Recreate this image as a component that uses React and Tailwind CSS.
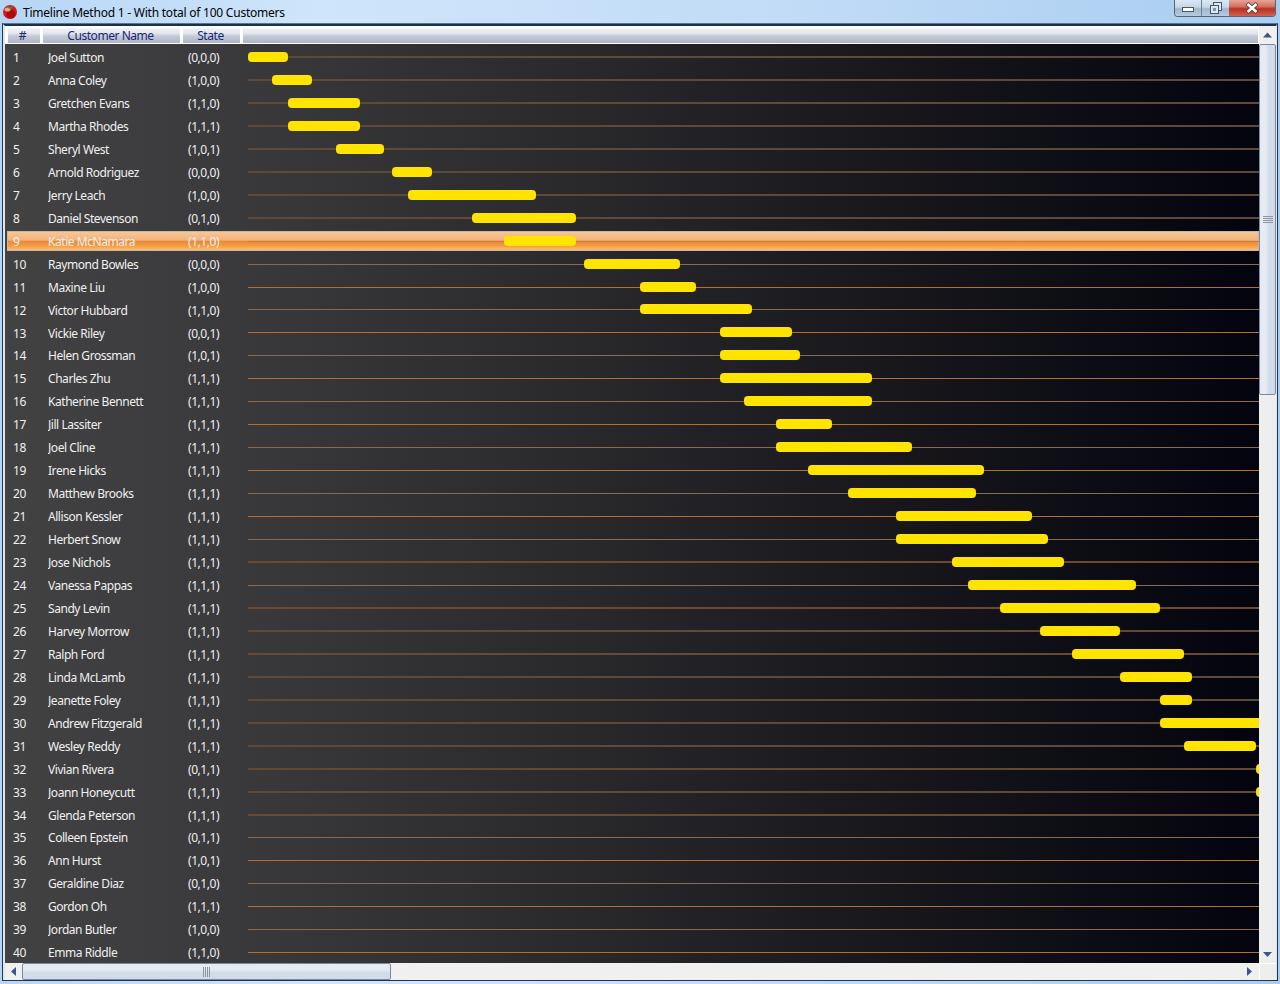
const customers = [
  ["Joel Sutton", "(0,0,0)", 248, 288, "s"],
  ["Anna Coley", "(1,0,0)", 272, 312, "s"],
  ["Gretchen Evans", "(1,1,0)", 288, 360, "s"],
  ["Martha Rhodes", "(1,1,1)", 288, 360, "s"],
  ["Sheryl West", "(1,0,1)", 336, 384, "s"],
  ["Arnold Rodriguez", "(0,0,0)", 392, 432, "s"],
  ["Jerry Leach", "(1,0,0)", 408, 536, "s"],
  ["Daniel Stevenson", "(0,1,0)", 472, 576, "s"],
  ["Katie McNamara", "(1,1,0)", 504, 576, "h"],
  ["Raymond Bowles", "(0,0,0)", 584, 680, "g"],
  ["Maxine Liu", "(1,0,0)", 640, 696, "o"],
  ["Victor Hubbard", "(1,1,0)", 640, 752, "g"],
  ["Vickie Riley", "(0,0,1)", 720, 792, "o"],
  ["Helen Grossman", "(1,0,1)", 720, 800, "g"],
  ["Charles Zhu", "(1,1,1)", 720, 872, "o"],
  ["Katherine Bennett", "(1,1,1)", 744, 872, "g"],
  ["Jill Lassiter", "(1,1,1)", 776, 832, "o"],
  ["Joel Cline", "(1,1,1)", 776, 912, "g"],
  ["Irene Hicks", "(1,1,1)", 808, 984, "o"],
  ["Matthew Brooks", "(1,1,1)", 848, 976, "g"],
  ["Allison Kessler", "(1,1,1)", 896, 1032, "o"],
  ["Herbert Snow", "(1,1,1)", 896, 1048, "g"],
  ["Jose Nichols", "(1,1,1)", 952, 1064, "m"],
  ["Vanessa Pappas", "(1,1,1)", 968, 1136, "g"],
  ["Sandy Levin", "(1,1,1)", 1000, 1160, "m"],
  ["Harvey Morrow", "(1,1,1)", 1040, 1120, "s"],
  ["Ralph Ford", "(1,1,1)", 1072, 1184, "m"],
  ["Linda McLamb", "(1,1,1)", 1120, 1192, "s"],
  ["Jeanette Foley", "(1,1,1)", 1160, 1192, "s"],
  ["Andrew Fitzgerald", "(1,1,1)", 1160, 1290, "s"],
  ["Wesley Reddy", "(1,1,1)", 1184, 1256, "s"],
  ["Vivian Rivera", "(0,1,1)", 1256, 1296, "s"],
  ["Joann Honeycutt", "(1,1,1)", 1256, 1296, "s"],
  ["Glenda Peterson", "(1,1,1)", 0, 0, "m"],
  ["Colleen Epstein", "(0,1,1)", 0, 0, "g"],
  ["Ann Hurst", "(1,0,1)", 0, 0, "o"],
  ["Geraldine Diaz", "(0,1,0)", 0, 0, "g"],
  ["Gordon Oh", "(1,1,1)", 0, 0, "o"],
  ["Jordan Butler", "(1,0,0)", 0, 0, "g"],
  ["Emma Riddle", "(1,1,0)", 0, 0, "o"],
];

const lineStyles = {
  s: "h-[2px] bg-[#5f4939]",
  m: "h-[2px] bg-[#6b4a30]",
  g: "h-px bg-[#8a6a50]",
  o: "h-px bg-[#b56e30]",
  h: "h-px bg-[#cf7f3c]",
};

const headerCell =
  "flex items-center justify-center h-full border border-white rounded-[1px] bg-[linear-gradient(180deg,#f4f5f8_0%,#e2e5ec_35%,#c4c9d6_55%,#aeb4c4_100%)] text-[#16297a] tracking-[-0.45px]";

function Row({ index, name, state, from, to, line }) {
  const selected = line === "h";
  return (
    <div className="relative flex h-[22.96px] shrink-0 items-center tracking-[-0.45px] text-[#f0f0f0]">
      {selected && (
        <div className="absolute left-[2px] right-0 top-[1px] h-[20px] border border-[#c9b79f] bg-[linear-gradient(180deg,#f6c796_0%,#f3b27c_45%,#e58a3e_52%,#f6993a_75%,#f8bd78_100%)]" />
      )}
      <span className="relative top-[0.62px] w-[43px] shrink-0 pl-[8px]">{index}</span>
      <span className="relative top-[0.62px] w-[140px] shrink-0 truncate">{name}</span>
      <span className="relative top-[0.62px] w-[60px] shrink-0">{state}</span>
      <div className="relative flex h-full flex-1 items-center overflow-hidden">
        <div className={`w-full ${lineStyles[line]}`} />
        {to > 0 && (
          <div
            className="absolute top-[6px] h-[10px] rounded-[4px] bg-[#ffe400]"
            style={{ left: from - 248, width: to - from }}
          />
        )}
      </div>
    </div>
  );
}

function ScrollArrow({ points, className }) {
  return (
    <svg width="9" height="9" viewBox="0 0 9 9" className={className}>
      <polygon points={points} fill="#3d5687" />
    </svg>
  );
}

export default function App() {
  return (
    <div className="flex h-[984px] w-[1280px] flex-col overflow-hidden bg-[linear-gradient(90deg,#b6d6f6_0%,#cfe5fb_25%,#c2dcf7_60%,#a9cdf0_100%)] font-['Noto_Sans',sans-serif] text-xs">
      <div className="flex h-[23px] shrink-0 items-start">
        <svg width="16" height="18" viewBox="0 0 16 18" className="ml-[2px] mt-[2px]">
          <circle cx="8" cy="10" r="7" fill="#d21c1c" />
          <circle cx="9" cy="12" r="4.5" fill="#a80c10" />
          <ellipse cx="5.5" cy="7.5" rx="3" ry="2" fill="#f49a8e" />
          <path d="M4 4 L8 5 L12 3.5 L9.5 6.5 L6.5 6.5 Z" fill="#3f8f2a" />
        </svg>
        <span className="ml-[5px] mt-[5px] tracking-[-0.23px] text-black">Timeline Method 1 - With total of 100 Customers</span>
        <div className="ml-auto mr-[4px] flex h-[17px] overflow-hidden rounded-b-[4px] border border-t-0 border-[#53657e]">
          <div className="flex w-[27px] items-center justify-center border-r border-[#6f829c] bg-[linear-gradient(180deg,#dbe7f3_0%,#c5d6e8_45%,#9fb6ce_55%,#b7cbdf_100%)]">
            <div className="mt-[2px] h-[5px] w-[12px] border border-[#46566c] bg-white" />
          </div>
          <div className="flex w-[27px] items-center justify-center bg-[linear-gradient(180deg,#dbe7f3_0%,#c5d6e8_45%,#9fb6ce_55%,#b7cbdf_100%)]">
            <svg width="12" height="12" viewBox="0 0 12 12">
              <rect x="3.5" y="0.5" width="8" height="8" fill="#dbe7f3" stroke="#46566c" />
              <rect x="0.5" y="3.5" width="8" height="8" fill="#dbe7f3" stroke="#46566c" />
              <rect x="3" y="6" width="3" height="3" fill="#8094ad" />
            </svg>
          </div>
          <div className="flex w-[46px] items-center justify-center bg-[linear-gradient(180deg,#e4a596_0%,#d37261_40%,#b93222_55%,#d0604c_100%)]">
            <svg width="14" height="12" viewBox="0 0 14 12">
              <path d="M2 1.5 L12 10.5 M12 1.5 L2 10.5" stroke="#4a3a3a" strokeWidth="4" />
              <path d="M2.5 2 L11.5 10 M11.5 2 L2.5 10" stroke="#ffffff" strokeWidth="2.6" />
            </svg>
          </div>
        </div>
      </div>

      <div className="mb-[3px] ml-[2px] mr-[2px] flex min-h-0 flex-1 flex-col border border-[#22364f] border-t-[#5f7388]">
        <div className="flex min-h-0 flex-1 flex-col border-l-[2px] border-r border-t-[2px] border-[#dfe6ee] border-t-[#17324f]">
          <div className="flex min-h-0 flex-1">
            <div className="flex min-w-0 flex-1 flex-col bg-[linear-gradient(90deg,#424243_0%,#3a3a3d_18%,#2a2a2d_45%,#16161b_72%,#04040f_100%)]">
              <div className="flex h-[18px] shrink-0 gap-px bg-white pl-[2px] pt-px">
                <div className={`${headerCell} w-[34px] pr-[3px]`}>#</div>
                <div className={`${headerCell} w-[139px] pr-[2px]`}>Customer Name</div>
                <div className={`${headerCell} w-[59px] pr-[2px]`}>State</div>
                <div className={`${headerCell} flex-1`} />
              </div>
              <div className="flex min-h-0 flex-1 flex-col overflow-hidden pt-[2px]">
                {customers.map(([name, state, from, to, line], i) => (
                  <Row key={name} index={i + 1} name={name} state={state} from={from} to={to} line={line} />
                ))}
              </div>
            </div>

            <div className="flex w-[17px] shrink-0 flex-col bg-[#eeeeee]">
              <div className="flex h-[18px] shrink-0 items-center justify-center bg-[#f0f0f0]">
                <ScrollArrow points="4.5,1.5 9,6.5 0,6.5" />
              </div>
              <div className="flex h-[351px] shrink-0 items-center justify-center rounded-[2px] border border-[#7a88a6] bg-[linear-gradient(90deg,#e6ebf3_0%,#e6ebf3_35%,#d2dce8_60%,#d2dce8_100%)]">
                <div className="flex flex-col gap-[1px]">
                  <div className="h-px w-[10px] bg-[#8f959e]" />
                  <div className="h-px w-[10px] bg-[#8f959e]" />
                  <div className="h-px w-[10px] bg-[#8f959e]" />
                  <div className="h-px w-[10px] bg-[#8f959e]" />
                </div>
              </div>
              <div className="flex-1" />
              <div className="flex h-[17px] shrink-0 items-center justify-center">
                <ScrollArrow points="0,2 9,2 4.5,7" />
              </div>
            </div>
          </div>

          <div className="flex h-[17px] shrink-0 bg-[#f0f0f0]">
            <div className="flex w-[17px] shrink-0 items-center justify-center">
              <ScrollArrow points="2,4.5 7,0 7,9" />
            </div>
            <div className="flex w-[369px] shrink-0 items-center justify-center rounded-[2px] border border-[#7a88a6] bg-[linear-gradient(180deg,#e6ebf3_0%,#e6ebf3_35%,#d2dce8_60%,#d2dce8_100%)]">
              <div className="flex gap-[1px]">
                <div className="h-[10px] w-px bg-[#8f959e]" />
                <div className="h-[10px] w-px bg-[#8f959e]" />
                <div className="h-[10px] w-px bg-[#8f959e]" />
                <div className="h-[10px] w-px bg-[#8f959e]" />
              </div>
            </div>
            <div className="flex flex-1 items-center justify-end pr-[5px]">
              <ScrollArrow points="2,0 7,4.5 2,9" />
            </div>
            <div className="w-[17px] shrink-0 border-l border-t border-white bg-[#eeeeee]" />
          </div>
        </div>
      </div>
    </div>
  );
}
